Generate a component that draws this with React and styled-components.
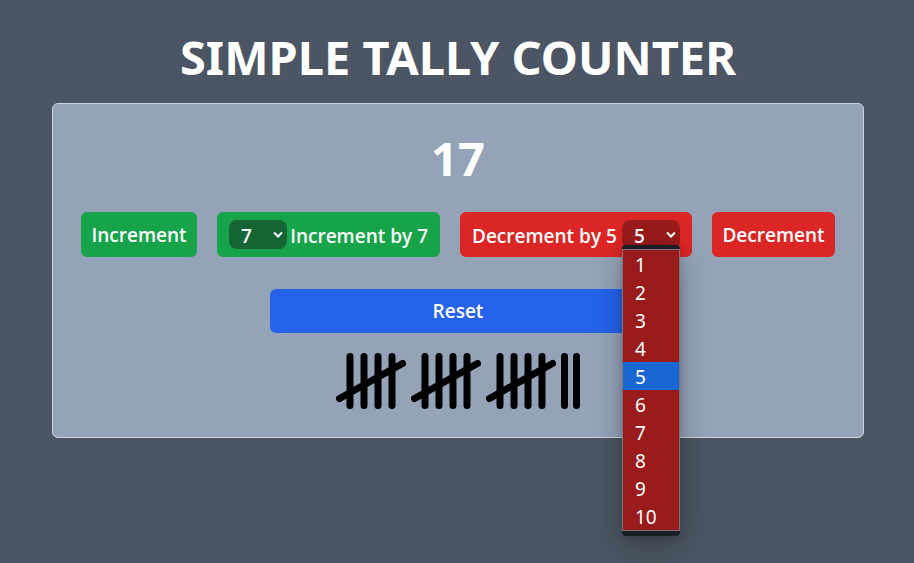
import React, { useState } from "react";
import styled, { createGlobalStyle } from "styled-components";

const GlobalStyle = createGlobalStyle`
  *, *::before, *::after { box-sizing: border-box; }
  html { background: #4b5563; }
  body {
    margin: 0;
    color: #fff;
    font-family: "Noto Sans", "Open Sans", sans-serif;
  }
  button, select { font: inherit; color: inherit; }
`;

const tones = {
  green: { base: "#16a34a", deep: "#166534" },
  red: { base: "#dc2626", deep: "#991b1b" },
  blue: { base: "#2563eb", deep: "#1e40af" },
};

const Page = styled.main`
  min-height: 100vh;
  padding: 27px 50px 24px 52px;
`;

const Title = styled.h1`
  margin: 0 0 16px;
  font-size: 47px;
  line-height: 60px;
  font-weight: 700;
  text-align: center;
  text-transform: uppercase;
  white-space: nowrap;
`;

const Card = styled.section`
  display: flex;
  flex-direction: column;
  align-items: center;
  padding: 24px 28px 28px;
  border: 1px solid #cbd5e1;
  border-radius: 6px;
  background: #94a3b8;
`;

const Count = styled.output`
  margin-bottom: 24px;
  font-size: 47px;
  line-height: 60px;
  font-weight: 700;
`;

const Controls = styled.div`
  display: grid;
  grid-template-columns: 116fr 223fr 232fr 123fr;
  gap: 20px;
  width: 100%;
  margin-bottom: 32px;
`;

const Button = styled.button`
  height: 45px;
  padding: 0;
  border: 0;
  border-radius: 6px;
  background: ${({ $tone }) => tones[$tone].base};
  font-family: "Open Sans", sans-serif;
  font-size: 19px;
  font-weight: 600;
  line-height: 28px;
  white-space: nowrap;
  cursor: pointer;
`;

const ResetButton = styled(Button)`
  width: 50%;
  height: 44px;
  margin-bottom: 20px;
`;

const StepGroup = styled.div`
  display: flex;
  align-items: center;
  height: 45px;
  padding: 0 12px;
  border-radius: 6px;
  background: ${({ $tone }) => tones[$tone].base};
`;

const StepButton = styled(Button)`
  flex: 1;
  padding-top: 2px;
  background: transparent;
  text-align: ${({ $align }) => $align};
`;

const Picker = styled.div`
  position: relative;
  flex: none;
  width: 58px;
  height: 29px;
`;

const Select = styled.select`
  display: block;
  width: 100%;
  height: 100%;
  padding: 2px 20px 0 12px;
  border: 0;
  border-radius: 8px;
  outline: none;
  appearance: none;
  background: ${({ $tone }) => tones[$tone].deep};
  font-family: "Open Sans", sans-serif;
  font-size: 19px;
  font-weight: 600;
  cursor: pointer;
`;

const Chevron = styled.svg`
  position: absolute;
  top: 11px;
  right: 4px;
  width: 10px;
  height: 8px;
  fill: none;
  stroke: #fff;
  stroke-width: 2;
  pointer-events: none;
`;

const Menu = styled.div`
  position: absolute;
  z-index: 1;
  top: 25px;
  left: 0;
  width: 100%;
  padding: 4px 0 5px;
  border-radius: 4px;
  background: #1b1d27;
  box-shadow: 0 10px 32px rgba(0, 0, 0, 0.24), 0 2px 8px rgba(0, 0, 0, 0.16);
`;

const OptionList = styled.ul`
  margin: 0;
  padding: 0;
  border: 1px solid #7b7478;
  list-style: none;
`;

const Option = styled.li`
  height: 28px;
  padding-left: 12px;
  background: ${({ $active }) => ($active ? "#1967d2" : "#991b1b")};
  font-size: 19px;
  line-height: 30px;
  cursor: pointer;
`;

const Tally = styled.div`
  display: flex;
  flex-wrap: wrap;
  justify-content: center;
  gap: 5px;
`;

const Mark = styled.svg`
  display: block;
  height: 56px;
  fill: none;
  stroke: #000;
  stroke-width: 7;
  stroke-linecap: round;
`;

const steps = [1, 2, 3, 4, 5, 6, 7, 8, 9, 10];

function Arrow() {
  return (
    <Chevron viewBox="0 0 10 8" aria-hidden="true">
      <path d="M1 1.5 5 5.5 9 1.5" />
    </Chevron>
  );
}

function StepSelect({ tone, label, value, onChange, ...rest }) {
  return (
    <Select
      $tone={tone}
      aria-label={label}
      value={value}
      onChange={(e) => onChange(Number(e.target.value))}
      {...rest}
    >
      {steps.map((n) => (
        <option key={n} value={n}>{n}</option>
      ))}
    </Select>
  );
}

function FiveMarks() {
  return (
    <Mark viewBox="0 0 70 56" width="70" aria-hidden="true">
      <path d="M14 3.5V52.5M28 3.5V52.5M42 3.5V52.5M56 3.5V52.5M3.5 45.5 66.5 10.5" />
    </Mark>
  );
}

function OneMark() {
  return (
    <Mark viewBox="0 0 7 56" width="7" aria-hidden="true">
      <path d="M3.5 3.5V52.5" />
    </Mark>
  );
}

export default function App() {
  const [count, setCount] = useState(17);
  const [up, setUp] = useState(7);
  const [down, setDown] = useState(5);
  const [open, setOpen] = useState(true);

  const change = (by) => setCount((c) => Math.max(0, c + by));

  return (
    <>
      <GlobalStyle />
      <Page>
        <Title>Simple Tally Counter</Title>
        <Card>
          <Count>{count}</Count>
          <Controls>
            <Button $tone="green" onClick={() => change(1)}>Increment</Button>
            <StepGroup $tone="green">
              <Picker>
                <StepSelect tone="green" label="Increment step" value={up} onChange={setUp} />
                <Arrow />
              </Picker>
              <StepButton $tone="green" $align="right" onClick={() => change(up)}>
                Increment by {up}
              </StepButton>
            </StepGroup>
            <StepGroup $tone="red">
              <StepButton $tone="red" $align="left" onClick={() => change(-down)}>
                Decrement by {down}
              </StepButton>
              <Picker>
                <StepSelect
                  tone="red"
                  label="Decrement step"
                  value={down}
                  onChange={setDown}
                  onMouseDown={(e) => {
                    e.preventDefault();
                    setOpen((o) => !o);
                  }}
                />
                <Arrow />
                {open && (
                  <Menu>
                    <OptionList role="listbox" aria-label="Decrement step options">
                      {steps.map((n) => (
                        <Option
                          key={n}
                          role="option"
                          aria-selected={n === down}
                          $active={n === down}
                          onClick={() => {
                            setDown(n);
                            setOpen(false);
                          }}
                        >
                          {n}
                        </Option>
                      ))}
                    </OptionList>
                  </Menu>
                )}
              </Picker>
            </StepGroup>
            <Button $tone="red" onClick={() => change(-1)}>Decrement</Button>
          </Controls>
          <ResetButton $tone="blue" onClick={() => setCount(0)}>Reset</ResetButton>
          <Tally>
            {Array.from({ length: Math.floor(count / 5) }, (_, i) => <FiveMarks key={i} />)}
            {Array.from({ length: count % 5 }, (_, i) => <OneMark key={i} />)}
          </Tally>
        </Card>
      </Page>
    </>
  );
}
